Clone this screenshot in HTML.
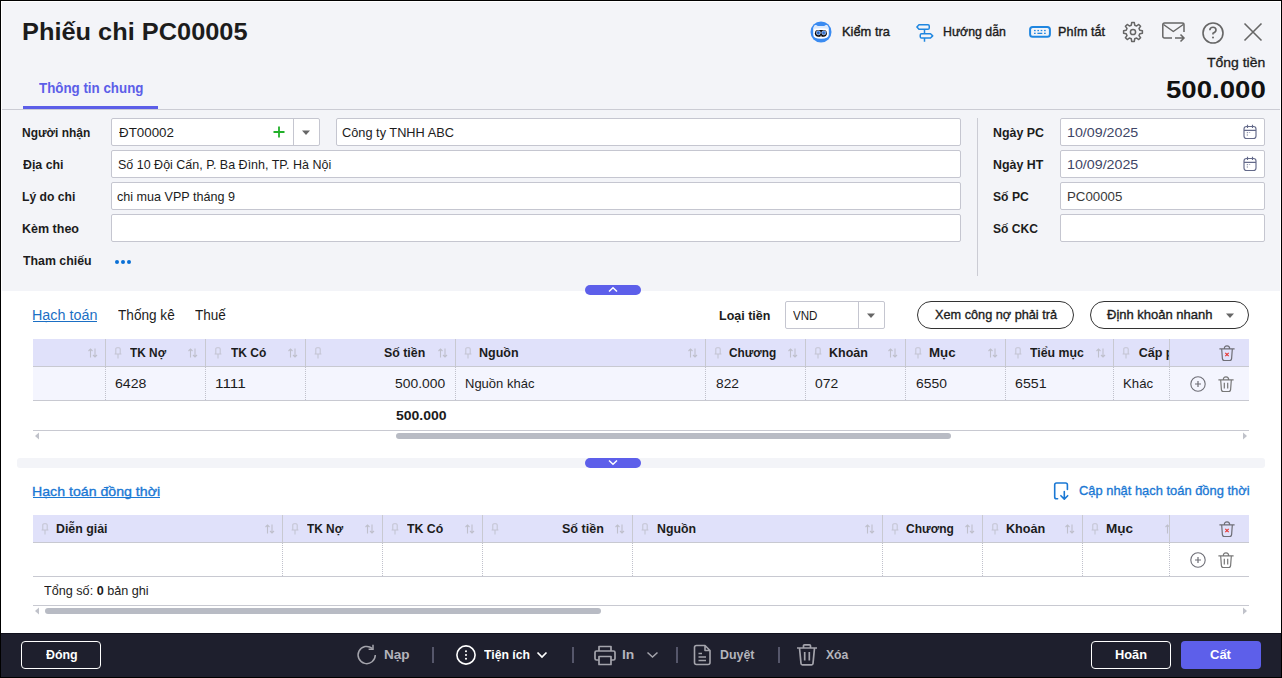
<!DOCTYPE html><html><head><meta charset="utf-8"><style>html,body{margin:0;padding:0;}body{width:1282px;height:678px;position:relative;overflow:hidden;background:#000;font-family:"Liberation Sans", sans-serif;}.t{position:absolute;white-space:nowrap;transform-origin:0 0;}</style></head><body>
<div style="position:absolute;left:1px;top:1px;width:1280px;height:676px;background:#fff;"></div>
<div style="position:absolute;left:2px;top:2px;width:1278px;height:289px;background:#f3f4f8;"></div>
<div style="position:absolute;left:1px;top:633px;width:1280px;height:44px;background:#1e1f2d;"></div>
<div style="position:absolute;left:1px;top:633px;width:1280px;height:1px;background:#10111d;"></div>
<svg style="position:absolute;left:810px;top:21px" width="22" height="22" viewBox="0 0 22 22"><circle cx="11" cy="11" r="10.5" fill="#3a8bf1"/><path d="M3.2 10 Q3.1 5 5.3 3.9 Q8 5.3 11 5.1 Q14 5.3 16.7 3.9 Q18.9 5 18.8 10 V13.5 Q18.7 17.8 11 17.8 Q3.3 17.8 3.2 13.5 Z" fill="#fff"/><path d="M3.4 8 Q3.6 4.8 5.3 3.9 Q8 5.3 11 5.1 Q14 5.3 16.7 3.9 Q18.4 4.8 18.6 8 Q11 6.5 3.4 8Z" fill="#dbe9fc"/><rect x="4.9" y="8.9" width="12" height="6.9" rx="3.45" fill="#050608"/><circle cx="8.4" cy="11.8" r="2.1" fill="#2f7ef0" stroke="#e8f0ff" stroke-width="0.6"/><circle cx="13.8" cy="11.8" r="2.1" fill="#2f7ef0" stroke="#e8f0ff" stroke-width="0.6"/><circle cx="8.2" cy="11.9" r="0.7" fill="#333"/><circle cx="13.6" cy="11.9" r="0.7" fill="#666"/><path d="M10 15 Q11 15.9 12 15" fill="none" stroke="#fff" stroke-width="0.7"/></svg>
<svg style="position:absolute;left:916px;top:23px" width="21" height="20" viewBox="0 0 21 20"><path d="M3 1.75 H12 Q13.25 1.75 13.25 3 V5 Q13.25 6.25 12 6.25 H3 L0.9 4 Z" fill="none" stroke="#1f86e0" stroke-width="1.5" stroke-linejoin="round"/><path d="M5.5 10.75 H14.5 L16.7 12.9 L14.5 15.05 H5.5 Q4.25 15.05 4.25 13.8 V12 Q4.25 10.75 5.5 10.75 Z" fill="none" stroke="#1f86e0" stroke-width="1.5" stroke-linejoin="round"/><path d="M8.5 6.25 V10.75 M8.5 15.05 V18.7" stroke="#1f86e0" stroke-width="1.5"/></svg>
<svg style="position:absolute;left:1028px;top:25px" width="24" height="14" viewBox="0 0 24 14"><rect x="2.1" y="2" width="19.8" height="9.8" rx="2.6" fill="none" stroke="#1f86e0" stroke-width="2"/><rect x="6.05" y="4.9" width="1.6" height="1.3" fill="#1f86e0"/><rect x="9.40" y="4.9" width="1.6" height="1.3" fill="#1f86e0"/><rect x="12.70" y="4.9" width="1.6" height="1.3" fill="#1f86e0"/><rect x="16.10" y="4.9" width="1.6" height="1.3" fill="#1f86e0"/><rect x="6.05" y="7.7" width="1.6" height="1.3" fill="#1f86e0"/><rect x="9.4" y="7.7" width="4.9" height="1.3" fill="#1f86e0"/><rect x="16.1" y="7.7" width="1.6" height="1.3" fill="#1f86e0"/></svg>
<svg style="position:absolute;left:1122px;top:21px" width="22" height="22" viewBox="0 0 22 22"><path d="M9.31 4.21 L9.68 1.59 L12.32 1.59 L12.69 4.21 L14.61 5.00 L16.72 3.41 L18.59 5.28 L17.00 7.39 L17.79 9.31 L20.41 9.68 L20.41 12.32 L17.79 12.69 L17.00 14.61 L18.59 16.72 L16.72 18.59 L14.61 17.00 L12.69 17.79 L12.32 20.41 L9.68 20.41 L9.31 17.79 L7.39 17.00 L5.28 18.59 L3.41 16.72 L5.00 14.61 L4.21 12.69 L1.59 12.32 L1.59 9.68 L4.21 9.31 L5.00 7.39 L3.41 5.28 L5.28 3.41 L7.39 5.00Z" fill="none" stroke="#666" stroke-width="1.5" stroke-linejoin="round"/><circle cx="11" cy="11" r="2.6" fill="none" stroke="#666" stroke-width="1.5"/></svg>
<svg style="position:absolute;left:1161px;top:21px" width="26" height="24" viewBox="0 0 26 24"><path d="M11 17 H3.5 Q1.8 17 1.8 15.3 V3.7 Q1.8 2 3.5 2 H21.2 Q23 2 23 3.7 V11" fill="none" stroke="#666" stroke-width="1.5"/><path d="M2.5 3.5 L12.3 10.5 L22.3 3.5" fill="none" stroke="#666" stroke-width="1.5" stroke-linejoin="round"/><path d="M14 17 H23 M19.5 13.5 L23 17 L19.5 20.5" fill="none" stroke="#666" stroke-width="1.5"/></svg>
<svg style="position:absolute;left:1202px;top:22px" width="22" height="22" viewBox="0 0 22 22"><circle cx="11" cy="11" r="10" fill="none" stroke="#666" stroke-width="1.6"/><path d="M7.8 8.3 Q8 5.3 11 5.3 Q14 5.3 14 8 Q14 10 11 11.2 V12.5" fill="none" stroke="#666" stroke-width="1.6"/><circle cx="11" cy="15.6" r="1" fill="#666"/></svg>
<svg style="position:absolute;left:1243px;top:22px" width="20" height="20" viewBox="0 0 20 20"><path d="M1.5 1.5 L18.5 18.5 M18.5 1.5 L1.5 18.5" stroke="#666" stroke-width="1.6"/></svg>
<div style="position:absolute;left:23px;top:106px;width:135px;height:3px;background:#5c5ee8;"></div>
<div style="position:absolute;left:2px;top:109px;width:1278px;height:1px;background:#cbccd4;"></div>
<div style="position:absolute;left:111px;top:118px;width:209px;height:28px;box-sizing:border-box;background:#fff;border:1px solid #c5c6d0;border-radius:2px;"></div>
<div style="position:absolute;left:293px;top:119px;width:1px;height:26px;background:#c5c6d0;"></div>
<svg style="position:absolute;left:273px;top:126px" width="12" height="12" viewBox="0 0 12 12"><path d="M6 0.5 V11.5 M0.5 6 H11.5" stroke="#22b02a" stroke-width="1.8"/></svg>
<svg style="position:absolute;left:301px;top:130px" width="10" height="6" viewBox="0 0 10 6"><path d="M1 0.5 H9 L5 5Z" fill="#666"/></svg>
<div style="position:absolute;left:336px;top:118px;width:625px;height:28px;box-sizing:border-box;background:#fff;border:1px solid #c5c6d0;border-radius:2px;"></div>
<div style="position:absolute;left:111px;top:150px;width:850px;height:28px;box-sizing:border-box;background:#fff;border:1px solid #c5c6d0;border-radius:2px;"></div>
<div style="position:absolute;left:111px;top:182px;width:850px;height:28px;box-sizing:border-box;background:#fff;border:1px solid #c5c6d0;border-radius:2px;"></div>
<div style="position:absolute;left:111px;top:214px;width:850px;height:28px;box-sizing:border-box;background:#fff;border:1px solid #c5c6d0;border-radius:2px;"></div>
<div style="position:absolute;left:115px;top:260px;width:4px;height:4px;border-radius:50%;background:#0a6fd6"></div>
<div style="position:absolute;left:121px;top:260px;width:4px;height:4px;border-radius:50%;background:#0a6fd6"></div>
<div style="position:absolute;left:127px;top:260px;width:4px;height:4px;border-radius:50%;background:#0a6fd6"></div>
<div style="position:absolute;left:977px;top:118px;width:1px;height:158px;background:#cbccd4;"></div>
<div style="position:absolute;left:1060px;top:118px;width:205px;height:28px;box-sizing:border-box;background:#fff;border:1px solid #c5c6d0;border-radius:2px;"></div>
<div style="position:absolute;left:1060px;top:150px;width:205px;height:28px;box-sizing:border-box;background:#fff;border:1px solid #c5c6d0;border-radius:2px;"></div>
<div style="position:absolute;left:1060px;top:182px;width:205px;height:28px;box-sizing:border-box;background:#fff;border:1px solid #c5c6d0;border-radius:2px;"></div>
<div style="position:absolute;left:1060px;top:214px;width:205px;height:28px;box-sizing:border-box;background:#fff;border:1px solid #c5c6d0;border-radius:2px;"></div>
<svg style="position:absolute;left:1243px;top:124px" width="14" height="16" viewBox="0 0 14 16"><rect x="1" y="2.5" width="12" height="12" rx="2.5" fill="none" stroke="#646a8a" stroke-width="1.15"/><path d="M1 6.3 H13 M4.5 0.8 V4 M9.5 0.8 V4" stroke="#646a8a" stroke-width="1.15"/><rect x="3.8" y="8.2" width="1" height="1" fill="#5a6080"/><rect x="3.8" y="10.5" width="1" height="1" fill="#5a6080"/><rect x="5.8" y="8.2" width="1.4" height="0.7" fill="#8a90b0"/></svg>
<svg style="position:absolute;left:1243px;top:156px" width="14" height="16" viewBox="0 0 14 16"><rect x="1" y="2.5" width="12" height="12" rx="2.5" fill="none" stroke="#646a8a" stroke-width="1.15"/><path d="M1 6.3 H13 M4.5 0.8 V4 M9.5 0.8 V4" stroke="#646a8a" stroke-width="1.15"/><rect x="3.8" y="8.2" width="1" height="1" fill="#5a6080"/><rect x="3.8" y="10.5" width="1" height="1" fill="#5a6080"/><rect x="5.8" y="8.2" width="1.4" height="0.7" fill="#8a90b0"/></svg>
<div style="position:absolute;left:585px;top:285px;width:56px;height:10px;background:#5d5fea;border-radius:5px;"></div>
<svg style="position:absolute;left:608px;top:286px" width="10" height="7" viewBox="0 0 10 7"><path d="M1 5.5 L5 1.8 L9 5.5" fill="none" stroke="#fff" stroke-width="1.5"/></svg>
<div style="position:absolute;left:17px;top:458px;width:1248px;height:10px;background:#f3f4f8;border-radius:3px;"></div>
<div style="position:absolute;left:585px;top:458px;width:56px;height:10px;background:#5d5fea;border-radius:5px;"></div>
<svg style="position:absolute;left:608px;top:459px" width="10" height="7" viewBox="0 0 10 7"><path d="M1 1.5 L5 5.2 L9 1.5" fill="none" stroke="#fff" stroke-width="1.5"/></svg>
<div style="position:absolute;left:33px;top:321px;width:64px;height:1px;background:#1b6fc4;"></div>
<div style="position:absolute;left:785px;top:301px;width:100px;height:28px;box-sizing:border-box;background:#fff;border:1px solid #c5c6d0;border-radius:2px;"></div>
<div style="position:absolute;left:858px;top:302px;width:1px;height:26px;background:#c5c6d0;"></div>
<svg style="position:absolute;left:866px;top:313px" width="10" height="6" viewBox="0 0 10 6"><path d="M1 0.5 H9 L5 5Z" fill="#666"/></svg>
<div style="position:absolute;left:917px;top:301px;width:157px;height:28px;box-sizing:border-box;border:1px solid #333;border-radius:14px;"></div>
<div style="position:absolute;left:1090px;top:301px;width:159px;height:28px;box-sizing:border-box;border:1px solid #333;border-radius:14px;"></div>
<svg style="position:absolute;left:1225px;top:313px" width="10" height="6" viewBox="0 0 10 6"><path d="M1 0.5 H9 L5 5Z" fill="#666"/></svg>
<div style="position:absolute;left:33px;top:339px;width:1216px;height:27px;background:#e0e1fa;"></div>
<div style="position:absolute;left:33px;top:366px;width:1216px;height:1px;background:#c8c9d1;"></div>
<div style="position:absolute;left:105px;top:339px;width:1px;height:27px;background:#c8c9d1;"></div>
<div style="position:absolute;left:205px;top:339px;width:1px;height:27px;background:#c8c9d1;"></div>
<div style="position:absolute;left:305px;top:339px;width:1px;height:27px;background:#c8c9d1;"></div>
<div style="position:absolute;left:455px;top:339px;width:1px;height:27px;background:#c8c9d1;"></div>
<div style="position:absolute;left:705px;top:339px;width:1px;height:27px;background:#c8c9d1;"></div>
<div style="position:absolute;left:805px;top:339px;width:1px;height:27px;background:#c8c9d1;"></div>
<div style="position:absolute;left:905px;top:339px;width:1px;height:27px;background:#c8c9d1;"></div>
<div style="position:absolute;left:1005px;top:339px;width:1px;height:27px;background:#c8c9d1;"></div>
<div style="position:absolute;left:1113px;top:339px;width:1px;height:27px;background:#c8c9d1;"></div>
<div style="position:absolute;left:1169px;top:339px;width:1px;height:27px;background:#c8c9d1;"></div>
<div style="position:absolute;left:33px;top:367px;width:1216px;height:33px;background:#f4f5fe;"></div>
<div style="position:absolute;left:33px;top:400px;width:1216px;height:1px;background:#c8c9d1;"></div>
<div style="position:absolute;left:105px;top:367px;width:0;height:33px;border-left:1px dotted #c0c1cc"></div>
<div style="position:absolute;left:205px;top:367px;width:0;height:33px;border-left:1px dotted #c0c1cc"></div>
<div style="position:absolute;left:305px;top:367px;width:0;height:33px;border-left:1px dotted #c0c1cc"></div>
<div style="position:absolute;left:455px;top:367px;width:0;height:33px;border-left:1px dotted #c0c1cc"></div>
<div style="position:absolute;left:705px;top:367px;width:0;height:33px;border-left:1px dotted #c0c1cc"></div>
<div style="position:absolute;left:805px;top:367px;width:0;height:33px;border-left:1px dotted #c0c1cc"></div>
<div style="position:absolute;left:905px;top:367px;width:0;height:33px;border-left:1px dotted #c0c1cc"></div>
<div style="position:absolute;left:1005px;top:367px;width:0;height:33px;border-left:1px dotted #c0c1cc"></div>
<div style="position:absolute;left:1113px;top:367px;width:0;height:33px;border-left:1px dotted #c0c1cc"></div>
<div style="position:absolute;left:1169px;top:367px;width:0;height:33px;border-left:1px dotted #c0c1cc"></div>
<div style="position:absolute;left:33px;top:430px;width:1216px;height:1px;background:#c8c9d1;"></div>
<svg style="position:absolute;left:114px;top:347px" width="9" height="12" viewBox="0 0 9 12"><path d="M1.8 6.6 V2 Q1.8 0.8 3 0.8 H5 Q6.2 0.8 6.2 2 V6.6 M0.6 6.9 H7.4 M4 6.9 V11.4" fill="none" stroke="#c3c4d2" stroke-width="1.05"/></svg>
<svg style="position:absolute;left:214px;top:347px" width="9" height="12" viewBox="0 0 9 12"><path d="M1.8 6.6 V2 Q1.8 0.8 3 0.8 H5 Q6.2 0.8 6.2 2 V6.6 M0.6 6.9 H7.4 M4 6.9 V11.4" fill="none" stroke="#c3c4d2" stroke-width="1.05"/></svg>
<svg style="position:absolute;left:314px;top:347px" width="9" height="12" viewBox="0 0 9 12"><path d="M1.8 6.6 V2 Q1.8 0.8 3 0.8 H5 Q6.2 0.8 6.2 2 V6.6 M0.6 6.9 H7.4 M4 6.9 V11.4" fill="none" stroke="#c3c4d2" stroke-width="1.05"/></svg>
<svg style="position:absolute;left:464px;top:347px" width="9" height="12" viewBox="0 0 9 12"><path d="M1.8 6.6 V2 Q1.8 0.8 3 0.8 H5 Q6.2 0.8 6.2 2 V6.6 M0.6 6.9 H7.4 M4 6.9 V11.4" fill="none" stroke="#c3c4d2" stroke-width="1.05"/></svg>
<svg style="position:absolute;left:714px;top:347px" width="9" height="12" viewBox="0 0 9 12"><path d="M1.8 6.6 V2 Q1.8 0.8 3 0.8 H5 Q6.2 0.8 6.2 2 V6.6 M0.6 6.9 H7.4 M4 6.9 V11.4" fill="none" stroke="#c3c4d2" stroke-width="1.05"/></svg>
<svg style="position:absolute;left:814px;top:347px" width="9" height="12" viewBox="0 0 9 12"><path d="M1.8 6.6 V2 Q1.8 0.8 3 0.8 H5 Q6.2 0.8 6.2 2 V6.6 M0.6 6.9 H7.4 M4 6.9 V11.4" fill="none" stroke="#c3c4d2" stroke-width="1.05"/></svg>
<svg style="position:absolute;left:914px;top:347px" width="9" height="12" viewBox="0 0 9 12"><path d="M1.8 6.6 V2 Q1.8 0.8 3 0.8 H5 Q6.2 0.8 6.2 2 V6.6 M0.6 6.9 H7.4 M4 6.9 V11.4" fill="none" stroke="#c3c4d2" stroke-width="1.05"/></svg>
<svg style="position:absolute;left:1014px;top:347px" width="9" height="12" viewBox="0 0 9 12"><path d="M1.8 6.6 V2 Q1.8 0.8 3 0.8 H5 Q6.2 0.8 6.2 2 V6.6 M0.6 6.9 H7.4 M4 6.9 V11.4" fill="none" stroke="#c3c4d2" stroke-width="1.05"/></svg>
<svg style="position:absolute;left:1122px;top:347px" width="9" height="12" viewBox="0 0 9 12"><path d="M1.8 6.6 V2 Q1.8 0.8 3 0.8 H5 Q6.2 0.8 6.2 2 V6.6 M0.6 6.9 H7.4 M4 6.9 V11.4" fill="none" stroke="#c3c4d2" stroke-width="1.05"/></svg>
<svg style="position:absolute;left:88px;top:348px" width="10" height="10" viewBox="0 0 10 10"><path d="M2.5 9.5 V1 M0.5 3 L2.5 1 L4.5 3 M7 0.5 V9 M5 7 L7 9 L9 7" fill="none" stroke="#bfc0cc" stroke-width="1.1"/></svg>
<svg style="position:absolute;left:188px;top:348px" width="10" height="10" viewBox="0 0 10 10"><path d="M2.5 9.5 V1 M0.5 3 L2.5 1 L4.5 3 M7 0.5 V9 M5 7 L7 9 L9 7" fill="none" stroke="#bfc0cc" stroke-width="1.1"/></svg>
<svg style="position:absolute;left:288px;top:348px" width="10" height="10" viewBox="0 0 10 10"><path d="M2.5 9.5 V1 M0.5 3 L2.5 1 L4.5 3 M7 0.5 V9 M5 7 L7 9 L9 7" fill="none" stroke="#bfc0cc" stroke-width="1.1"/></svg>
<svg style="position:absolute;left:438px;top:348px" width="10" height="10" viewBox="0 0 10 10"><path d="M2.5 9.5 V1 M0.5 3 L2.5 1 L4.5 3 M7 0.5 V9 M5 7 L7 9 L9 7" fill="none" stroke="#bfc0cc" stroke-width="1.1"/></svg>
<svg style="position:absolute;left:688px;top:348px" width="10" height="10" viewBox="0 0 10 10"><path d="M2.5 9.5 V1 M0.5 3 L2.5 1 L4.5 3 M7 0.5 V9 M5 7 L7 9 L9 7" fill="none" stroke="#bfc0cc" stroke-width="1.1"/></svg>
<svg style="position:absolute;left:788px;top:348px" width="10" height="10" viewBox="0 0 10 10"><path d="M2.5 9.5 V1 M0.5 3 L2.5 1 L4.5 3 M7 0.5 V9 M5 7 L7 9 L9 7" fill="none" stroke="#bfc0cc" stroke-width="1.1"/></svg>
<svg style="position:absolute;left:888px;top:348px" width="10" height="10" viewBox="0 0 10 10"><path d="M2.5 9.5 V1 M0.5 3 L2.5 1 L4.5 3 M7 0.5 V9 M5 7 L7 9 L9 7" fill="none" stroke="#bfc0cc" stroke-width="1.1"/></svg>
<svg style="position:absolute;left:988px;top:348px" width="10" height="10" viewBox="0 0 10 10"><path d="M2.5 9.5 V1 M0.5 3 L2.5 1 L4.5 3 M7 0.5 V9 M5 7 L7 9 L9 7" fill="none" stroke="#bfc0cc" stroke-width="1.1"/></svg>
<svg style="position:absolute;left:1096px;top:348px" width="10" height="10" viewBox="0 0 10 10"><path d="M2.5 9.5 V1 M0.5 3 L2.5 1 L4.5 3 M7 0.5 V9 M5 7 L7 9 L9 7" fill="none" stroke="#bfc0cc" stroke-width="1.1"/></svg>
<div style="position:absolute;left:1138px;top:340px;width:31px;height:26px;overflow:hidden"><div class="t" style="left:0.75px;top:7.22px;font-size:12.5px;line-height:12.5px;font-weight:700;color:#1c1c1c">Cấp phát</div></div>
<svg style="position:absolute;left:1219px;top:345px" width="16" height="16" viewBox="0 0 16 16"><path d="M0.4 3.9 H15.6 M5.3 3.9 Q5.3 0.9 8 0.9 Q10.7 0.9 10.7 3.9 M2.7 4.2 L3.4 13.6 Q3.6 15.6 5.4 15.6 H10.6 Q12.4 15.6 12.6 13.6 L13.3 4.2" fill="none" stroke="#6e6e76" stroke-width="1.2"/><path d="M6.3 7.8 L9.7 11.2 M9.7 7.8 L6.3 11.2" stroke="#e53935" stroke-width="1.2"/></svg>
<svg style="position:absolute;left:1190px;top:376px" width="16" height="16" viewBox="0 0 16 16"><circle cx="8" cy="8" r="7.2" fill="none" stroke="#6e6e76" stroke-width="1.1"/><path d="M8 5 V11 M5 8 H11" stroke="#6e6e76" stroke-width="1.2"/></svg>
<svg style="position:absolute;left:1218px;top:376px" width="16" height="16" viewBox="0 0 16 16"><path d="M0.4 3.9 H15.6 M5.3 3.9 Q5.3 0.9 8 0.9 Q10.7 0.9 10.7 3.9 M2.7 4.2 L3.4 13.6 Q3.6 15.6 5.4 15.6 H10.6 Q12.4 15.6 12.6 13.6 L13.3 4.2 M6.3 6.8 V12.5 M9.7 6.8 V12.5" fill="none" stroke="#777" stroke-width="1.2"/></svg>
<svg style="position:absolute;left:34px;top:432px" width="6" height="8" viewBox="0 0 6 8"><path d="M5 0.5 V7.5 L1 4Z" fill="#c0c2ca"/></svg>
<svg style="position:absolute;left:1242px;top:432px" width="6" height="8" viewBox="0 0 6 8"><path d="M1 0.5 V7.5 L5 4Z" fill="#c0c2ca"/></svg>
<div style="position:absolute;left:396px;top:433px;width:555px;height:6px;background:#b8bbc4;border-radius:3px;"></div>
<div style="position:absolute;left:33px;top:497px;width:127px;height:1px;background:#1a78d4;"></div>
<svg style="position:absolute;left:1052px;top:481px" width="18" height="20" viewBox="0 0 18 20"><path d="M5.6 17.7 H4.5 Q2.7 17.7 2.7 15.9 V3.8 Q2.7 2 4.5 2 H13.6 Q15.4 2 15.4 3.8 V8.5" fill="none" stroke="#1a78d4" stroke-width="1.6" stroke-linecap="round"/><path d="M12.3 10.6 V18 M8.9 14.7 L12.3 18.1 L15.7 14.7" fill="none" stroke="#1a78d4" stroke-width="1.6" stroke-linecap="round" stroke-linejoin="round"/></svg>
<div style="position:absolute;left:33px;top:515px;width:1216px;height:27px;background:#e0e1fa;"></div>
<div style="position:absolute;left:33px;top:542px;width:1216px;height:1px;background:#c8c9d1;"></div>
<div style="position:absolute;left:282px;top:515px;width:1px;height:27px;background:#c8c9d1;"></div>
<div style="position:absolute;left:382px;top:515px;width:1px;height:27px;background:#c8c9d1;"></div>
<div style="position:absolute;left:482px;top:515px;width:1px;height:27px;background:#c8c9d1;"></div>
<div style="position:absolute;left:632px;top:515px;width:1px;height:27px;background:#c8c9d1;"></div>
<div style="position:absolute;left:882px;top:515px;width:1px;height:27px;background:#c8c9d1;"></div>
<div style="position:absolute;left:982px;top:515px;width:1px;height:27px;background:#c8c9d1;"></div>
<div style="position:absolute;left:1082px;top:515px;width:1px;height:27px;background:#c8c9d1;"></div>
<div style="position:absolute;left:1169px;top:515px;width:1px;height:27px;background:#c8c9d1;"></div>
<div style="position:absolute;left:282px;top:543px;width:0;height:33px;border-left:1px dotted #c0c1cc"></div>
<div style="position:absolute;left:382px;top:543px;width:0;height:33px;border-left:1px dotted #c0c1cc"></div>
<div style="position:absolute;left:482px;top:543px;width:0;height:33px;border-left:1px dotted #c0c1cc"></div>
<div style="position:absolute;left:632px;top:543px;width:0;height:33px;border-left:1px dotted #c0c1cc"></div>
<div style="position:absolute;left:882px;top:543px;width:0;height:33px;border-left:1px dotted #c0c1cc"></div>
<div style="position:absolute;left:982px;top:543px;width:0;height:33px;border-left:1px dotted #c0c1cc"></div>
<div style="position:absolute;left:1082px;top:543px;width:0;height:33px;border-left:1px dotted #c0c1cc"></div>
<div style="position:absolute;left:1169px;top:543px;width:0;height:33px;border-left:1px dotted #c0c1cc"></div>
<div style="position:absolute;left:33px;top:576px;width:1216px;height:1px;background:#c8c9d1;"></div>
<div style="position:absolute;left:33px;top:605px;width:1216px;height:1px;background:#c8c9d1;"></div>
<svg style="position:absolute;left:41px;top:523px" width="9" height="12" viewBox="0 0 9 12"><path d="M1.8 6.6 V2 Q1.8 0.8 3 0.8 H5 Q6.2 0.8 6.2 2 V6.6 M0.6 6.9 H7.4 M4 6.9 V11.4" fill="none" stroke="#c3c4d2" stroke-width="1.05"/></svg>
<svg style="position:absolute;left:291px;top:523px" width="9" height="12" viewBox="0 0 9 12"><path d="M1.8 6.6 V2 Q1.8 0.8 3 0.8 H5 Q6.2 0.8 6.2 2 V6.6 M0.6 6.9 H7.4 M4 6.9 V11.4" fill="none" stroke="#c3c4d2" stroke-width="1.05"/></svg>
<svg style="position:absolute;left:391px;top:523px" width="9" height="12" viewBox="0 0 9 12"><path d="M1.8 6.6 V2 Q1.8 0.8 3 0.8 H5 Q6.2 0.8 6.2 2 V6.6 M0.6 6.9 H7.4 M4 6.9 V11.4" fill="none" stroke="#c3c4d2" stroke-width="1.05"/></svg>
<svg style="position:absolute;left:491px;top:523px" width="9" height="12" viewBox="0 0 9 12"><path d="M1.8 6.6 V2 Q1.8 0.8 3 0.8 H5 Q6.2 0.8 6.2 2 V6.6 M0.6 6.9 H7.4 M4 6.9 V11.4" fill="none" stroke="#c3c4d2" stroke-width="1.05"/></svg>
<svg style="position:absolute;left:641px;top:523px" width="9" height="12" viewBox="0 0 9 12"><path d="M1.8 6.6 V2 Q1.8 0.8 3 0.8 H5 Q6.2 0.8 6.2 2 V6.6 M0.6 6.9 H7.4 M4 6.9 V11.4" fill="none" stroke="#c3c4d2" stroke-width="1.05"/></svg>
<svg style="position:absolute;left:891px;top:523px" width="9" height="12" viewBox="0 0 9 12"><path d="M1.8 6.6 V2 Q1.8 0.8 3 0.8 H5 Q6.2 0.8 6.2 2 V6.6 M0.6 6.9 H7.4 M4 6.9 V11.4" fill="none" stroke="#c3c4d2" stroke-width="1.05"/></svg>
<svg style="position:absolute;left:991px;top:523px" width="9" height="12" viewBox="0 0 9 12"><path d="M1.8 6.6 V2 Q1.8 0.8 3 0.8 H5 Q6.2 0.8 6.2 2 V6.6 M0.6 6.9 H7.4 M4 6.9 V11.4" fill="none" stroke="#c3c4d2" stroke-width="1.05"/></svg>
<svg style="position:absolute;left:1091px;top:523px" width="9" height="12" viewBox="0 0 9 12"><path d="M1.8 6.6 V2 Q1.8 0.8 3 0.8 H5 Q6.2 0.8 6.2 2 V6.6 M0.6 6.9 H7.4 M4 6.9 V11.4" fill="none" stroke="#c3c4d2" stroke-width="1.05"/></svg>
<svg style="position:absolute;left:265px;top:524px" width="10" height="10" viewBox="0 0 10 10"><path d="M2.5 9.5 V1 M0.5 3 L2.5 1 L4.5 3 M7 0.5 V9 M5 7 L7 9 L9 7" fill="none" stroke="#bfc0cc" stroke-width="1.1"/></svg>
<svg style="position:absolute;left:365px;top:524px" width="10" height="10" viewBox="0 0 10 10"><path d="M2.5 9.5 V1 M0.5 3 L2.5 1 L4.5 3 M7 0.5 V9 M5 7 L7 9 L9 7" fill="none" stroke="#bfc0cc" stroke-width="1.1"/></svg>
<svg style="position:absolute;left:465px;top:524px" width="10" height="10" viewBox="0 0 10 10"><path d="M2.5 9.5 V1 M0.5 3 L2.5 1 L4.5 3 M7 0.5 V9 M5 7 L7 9 L9 7" fill="none" stroke="#bfc0cc" stroke-width="1.1"/></svg>
<svg style="position:absolute;left:615px;top:524px" width="10" height="10" viewBox="0 0 10 10"><path d="M2.5 9.5 V1 M0.5 3 L2.5 1 L4.5 3 M7 0.5 V9 M5 7 L7 9 L9 7" fill="none" stroke="#bfc0cc" stroke-width="1.1"/></svg>
<svg style="position:absolute;left:865px;top:524px" width="10" height="10" viewBox="0 0 10 10"><path d="M2.5 9.5 V1 M0.5 3 L2.5 1 L4.5 3 M7 0.5 V9 M5 7 L7 9 L9 7" fill="none" stroke="#bfc0cc" stroke-width="1.1"/></svg>
<svg style="position:absolute;left:965px;top:524px" width="10" height="10" viewBox="0 0 10 10"><path d="M2.5 9.5 V1 M0.5 3 L2.5 1 L4.5 3 M7 0.5 V9 M5 7 L7 9 L9 7" fill="none" stroke="#bfc0cc" stroke-width="1.1"/></svg>
<svg style="position:absolute;left:1065px;top:524px" width="10" height="10" viewBox="0 0 10 10"><path d="M2.5 9.5 V1 M0.5 3 L2.5 1 L4.5 3 M7 0.5 V9 M5 7 L7 9 L9 7" fill="none" stroke="#bfc0cc" stroke-width="1.1"/></svg>
<div style="position:absolute;left:1165px;top:524px;width:4px;height:10px;overflow:hidden"><svg style="position:absolute;left:0;top:0" width="10" height="10"><path d="M2.5 9.5 V1 M0.5 3 L2.5 1 L4.5 3 M7 0.5 V9 M5 7 L7 9 L9 7" fill="none" stroke="#bfc0cc" stroke-width="1.1"/></svg></div>
<svg style="position:absolute;left:1219px;top:521px" width="16" height="16" viewBox="0 0 16 16"><path d="M0.4 3.9 H15.6 M5.3 3.9 Q5.3 0.9 8 0.9 Q10.7 0.9 10.7 3.9 M2.7 4.2 L3.4 13.6 Q3.6 15.6 5.4 15.6 H10.6 Q12.4 15.6 12.6 13.6 L13.3 4.2" fill="none" stroke="#6e6e76" stroke-width="1.2"/><path d="M6.3 7.8 L9.7 11.2 M9.7 7.8 L6.3 11.2" stroke="#e53935" stroke-width="1.2"/></svg>
<svg style="position:absolute;left:1190px;top:552px" width="16" height="16" viewBox="0 0 16 16"><circle cx="8" cy="8" r="7.2" fill="none" stroke="#6e6e76" stroke-width="1.1"/><path d="M8 5 V11 M5 8 H11" stroke="#6e6e76" stroke-width="1.2"/></svg>
<svg style="position:absolute;left:1218px;top:552px" width="16" height="16" viewBox="0 0 16 16"><path d="M0.4 3.9 H15.6 M5.3 3.9 Q5.3 0.9 8 0.9 Q10.7 0.9 10.7 3.9 M2.7 4.2 L3.4 13.6 Q3.6 15.6 5.4 15.6 H10.6 Q12.4 15.6 12.6 13.6 L13.3 4.2 M6.3 6.8 V12.5 M9.7 6.8 V12.5" fill="none" stroke="#777" stroke-width="1.2"/></svg>
<svg style="position:absolute;left:34px;top:607px" width="6" height="8" viewBox="0 0 6 8"><path d="M5 0.5 V7.5 L1 4Z" fill="#c0c2ca"/></svg>
<svg style="position:absolute;left:1242px;top:607px" width="6" height="8" viewBox="0 0 6 8"><path d="M1 0.5 V7.5 L5 4Z" fill="#c0c2ca"/></svg>
<div style="position:absolute;left:45px;top:608px;width:556px;height:6px;background:#b8bbc4;border-radius:3px;"></div>
<div style="position:absolute;left:21px;top:641px;width:80px;height:28px;box-sizing:border-box;border:1px solid #fff;border-radius:4px;"></div>
<svg style="position:absolute;left:356px;top:644px" width="22" height="22" viewBox="0 0 22 22"><path d="M19.3 11 A8.6 8.6 0 1 1 16.2 4.4" fill="none" stroke="#a4a4ac" stroke-width="1.5"/><path d="M17 0.8 V5.2 H12.6" fill="none" stroke="#a4a4ac" stroke-width="1.5"/></svg>
<div style="position:absolute;left:432px;top:647px;width:2px;height:16px;background:#55566a;"></div>
<svg style="position:absolute;left:455px;top:644px" width="22" height="22" viewBox="0 0 22 22"><circle cx="11" cy="11" r="9.1" fill="none" stroke="#fff" stroke-width="1.6"/><circle cx="11" cy="7.3" r="1.05" fill="#fff"/><circle cx="11" cy="11" r="1.05" fill="#fff"/><circle cx="11" cy="14.7" r="1.05" fill="#fff"/></svg>
<svg style="position:absolute;left:536px;top:651px" width="12" height="8" viewBox="0 0 12 8"><path d="M1.5 1.5 L6 6 L10.5 1.5" fill="none" stroke="#fff" stroke-width="1.7"/></svg>
<div style="position:absolute;left:572px;top:647px;width:2px;height:16px;background:#55566a;"></div>
<svg style="position:absolute;left:593px;top:644px" width="24" height="22" viewBox="0 0 24 22"><path d="M6 7 V2.5 H18 V7 M6 16 H3.5 Q2 16 2 14.5 V8.5 Q2 7 3.5 7 H20.5 Q22 7 22 8.5 V14.5 Q22 16 20.5 16 H18 M6 12.5 H18 V20.5 H6Z" fill="none" stroke="#a4a4ac" stroke-width="1.7" stroke-linejoin="round"/></svg>
<svg style="position:absolute;left:646px;top:651px" width="13" height="8" viewBox="0 0 13 8"><path d="M1.5 1.5 L6.5 6 L11.5 1.5" fill="none" stroke="#a4a4ac" stroke-width="1.5"/></svg>
<div style="position:absolute;left:676px;top:647px;width:2px;height:16px;background:#55566a;"></div>
<svg style="position:absolute;left:693px;top:644px" width="20" height="22" viewBox="0 0 20 22"><path d="M3.5 1.5 H12 L17 6.5 V18.5 Q17 20.5 15 20.5 H3.5 Q1.5 20.5 1.5 18.5 V3.5 Q1.5 1.5 3.5 1.5Z M12 1.5 V6.5 H17 M5.5 9.5 H9 M5.5 13 H13 M5.5 16.5 H13" fill="none" stroke="#a4a4ac" stroke-width="1.6" stroke-linejoin="round"/></svg>
<div style="position:absolute;left:778px;top:647px;width:2px;height:16px;background:#55566a;"></div>
<svg style="position:absolute;left:795px;top:643px" width="24" height="24" viewBox="0 0 24 24"><path d="M2 5 H22 M8.5 5 V2.8 Q8.5 1.8 9.5 1.8 H14.5 Q15.5 1.8 15.5 2.8 V5 M4.5 5 L6 20.5 Q6.1 21.8 7.4 21.8 H16.6 Q17.9 21.8 18 20.5 L19.5 5 M9.7 9 V17.5 M14.3 9 V17.5" fill="none" stroke="#a4a4ac" stroke-width="1.7"/></svg>
<div style="position:absolute;left:1091px;top:641px;width:80px;height:28px;box-sizing:border-box;border:1px solid #fff;border-radius:4px;"></div>
<div style="position:absolute;left:1181px;top:641px;width:80px;height:28px;background:#5d5fea;border-radius:4px;"></div>
<div class="t" style="left:22.00px;top:20.00px;font-size:24px;line-height:24px;font-weight:700;color:#1c1c1c;transform:scaleX(1.0569);">Phiếu chi PC00005</div>
<div class="t" style="left:841.70px;top:25.00px;font-size:13px;line-height:13px;font-weight:400;color:#1c1c1c;transform:scaleX(0.9898);-webkit-text-stroke:0.4px #1c1c1c;">Kiểm tra</div>
<div class="t" style="left:942.70px;top:25.00px;font-size:13px;line-height:13px;font-weight:400;color:#1c1c1c;transform:scaleX(0.9463);-webkit-text-stroke:0.4px #1c1c1c;">Hướng dẫn</div>
<div class="t" style="left:1057.70px;top:25.00px;font-size:13px;line-height:13px;font-weight:400;color:#1c1c1c;transform:scaleX(0.9690);-webkit-text-stroke:0.4px #1c1c1c;">Phím tắt</div>
<div class="t" style="left:1207.00px;top:56.00px;font-size:13px;line-height:13px;font-weight:400;color:#1c1c1c;transform:scaleX(1.0728);-webkit-text-stroke:0.3px #1c1c1c;">Tổng tiền</div>
<div class="t" style="left:1165.66px;top:78.00px;font-size:24px;line-height:24px;font-weight:700;color:#111;transform:scaleX(1.1509);">500.000</div>
<div class="t" style="left:38.66px;top:81.00px;font-size:14px;line-height:14px;font-weight:700;color:#5c5ee8;transform:scaleX(0.9524);">Thông tin chung</div>
<div class="t" style="left:22.32px;top:127.00px;font-size:12.5px;line-height:12.5px;font-weight:700;color:#1c1c1c;transform:scaleX(0.9561);">Người nhận</div>
<div class="t" style="left:23.32px;top:159.00px;font-size:12.5px;line-height:12.5px;font-weight:700;color:#1c1c1c;transform:scaleX(0.9887);">Địa chi</div>
<div class="t" style="left:22.32px;top:191.00px;font-size:12.5px;line-height:12.5px;font-weight:700;color:#1c1c1c;transform:scaleX(0.9726);">Lý do chi</div>
<div class="t" style="left:22.32px;top:223.00px;font-size:12.5px;line-height:12.5px;font-weight:700;color:#1c1c1c;transform:scaleX(1.0009);">Kèm theo</div>
<div class="t" style="left:23.32px;top:255.00px;font-size:12.5px;line-height:12.5px;font-weight:700;color:#1c1c1c;transform:scaleX(0.9873);">Tham chiếu</div>
<div class="t" style="left:118.70px;top:126.00px;font-size:13px;line-height:13px;font-weight:400;color:#1c1c1c;transform:scaleX(1.0270);">ĐT00002</div>
<div class="t" style="left:341.70px;top:126.00px;font-size:13px;line-height:13px;font-weight:400;color:#1c1c1c;transform:scaleX(0.9825);">Công ty TNHH ABC</div>
<div class="t" style="left:117.70px;top:158.00px;font-size:13px;line-height:13px;font-weight:400;color:#1c1c1c;transform:scaleX(0.9610);">Số 10 Đội Cấn, P. Ba Đình, TP. Hà Nội</div>
<div class="t" style="left:117.34px;top:190.00px;font-size:13px;line-height:13px;font-weight:400;color:#1c1c1c;transform:scaleX(0.9673);">chi mua VPP tháng 9</div>
<div class="t" style="left:992.70px;top:127.00px;font-size:12.5px;line-height:12.5px;font-weight:700;color:#1c1c1c;transform:scaleX(0.9902);">Ngày PC</div>
<div class="t" style="left:992.70px;top:159.00px;font-size:12.5px;line-height:12.5px;font-weight:700;color:#1c1c1c;transform:scaleX(0.9902);">Ngày HT</div>
<div class="t" style="left:992.70px;top:191.00px;font-size:12.5px;line-height:12.5px;font-weight:700;color:#1c1c1c;transform:scaleX(0.9731);">Số PC</div>
<div class="t" style="left:992.70px;top:223.00px;font-size:12.5px;line-height:12.5px;font-weight:700;color:#1c1c1c;transform:scaleX(0.9670);">Số CKC</div>
<div class="t" style="left:1066.70px;top:126.00px;font-size:13px;line-height:13px;font-weight:400;color:#3e4566;transform:scaleX(1.0955);">10/09/2025</div>
<div class="t" style="left:1066.70px;top:158.00px;font-size:13px;line-height:13px;font-weight:400;color:#3e4566;transform:scaleX(1.0955);">10/09/2025</div>
<div class="t" style="left:1066.70px;top:190.00px;font-size:13px;line-height:13px;font-weight:400;color:#3a3a3a;transform:scaleX(1.0220);">PC00005</div>
<div class="t" style="left:32.36px;top:308.00px;font-size:14px;line-height:14px;font-weight:400;color:#1b6fc4;transform:scaleX(1.0243);">Hạch toán</div>
<div class="t" style="left:117.68px;top:308.00px;font-size:14px;line-height:14px;font-weight:400;color:#1c1c1c;transform:scaleX(0.9719);">Thống kê</div>
<div class="t" style="left:194.64px;top:308.00px;font-size:14px;line-height:14px;font-weight:400;color:#1c1c1c;transform:scaleX(0.9677);">Thuế</div>
<div class="t" style="left:718.68px;top:310.00px;font-size:12.5px;line-height:12.5px;font-weight:700;color:#1c1c1c;transform:scaleX(0.9987);">Loại tiền</div>
<div class="t" style="left:792.66px;top:309.00px;font-size:13px;line-height:13px;font-weight:400;color:#1c1c1c;transform:scaleX(0.8913);">VND</div>
<div class="t" style="left:934.70px;top:308.00px;font-size:13px;line-height:13px;font-weight:400;color:#1c1c1c;transform:scaleX(0.9773);-webkit-text-stroke:0.35px #1c1c1c;">Xem công nợ phải trả</div>
<div class="t" style="left:1107.00px;top:308.00px;font-size:13px;line-height:13px;font-weight:400;color:#1c1c1c;transform:scaleX(0.9997);-webkit-text-stroke:0.35px #1c1c1c;">Định khoản nhanh</div>
<div class="t" style="left:130.36px;top:347.00px;font-size:12.5px;line-height:12.5px;font-weight:700;color:#1c1c1c;transform:scaleX(0.9474);">TK Nợ</div>
<div class="t" style="left:230.70px;top:347.00px;font-size:12.5px;line-height:12.5px;font-weight:700;color:#1c1c1c;transform:scaleX(0.9597);">TK Có</div>
<div class="t" style="left:384.36px;top:347.00px;font-size:12.5px;line-height:12.5px;font-weight:700;color:#1c1c1c;transform:scaleX(0.9887);">Số tiền</div>
<div class="t" style="left:479.00px;top:347.00px;font-size:12.5px;line-height:12.5px;font-weight:700;color:#1c1c1c;transform:scaleX(1.0000);">Nguồn</div>
<div class="t" style="left:728.70px;top:347.00px;font-size:12.5px;line-height:12.5px;font-weight:700;color:#1c1c1c;transform:scaleX(0.9470);">Chương</div>
<div class="t" style="left:829.00px;top:347.00px;font-size:12.5px;line-height:12.5px;font-weight:700;color:#1c1c1c;transform:scaleX(0.9984);">Khoản</div>
<div class="t" style="left:929.36px;top:347.00px;font-size:12.5px;line-height:12.5px;font-weight:700;color:#1c1c1c;transform:scaleX(1.0657);">Mục</div>
<div class="t" style="left:1030.32px;top:347.00px;font-size:12.5px;line-height:12.5px;font-weight:700;color:#1c1c1c;transform:scaleX(0.9846);">Tiểu mục</div>
<div class="t" style="left:115.34px;top:377.00px;font-size:13px;line-height:13px;font-weight:400;color:#1c1c1c;transform:scaleX(1.0871);">6428</div>
<div class="t" style="left:215.32px;top:377.00px;font-size:13px;line-height:13px;font-weight:400;color:#1c1c1c;transform:scaleX(1.1824);">1111</div>
<div class="t" style="left:394.70px;top:377.00px;font-size:13px;line-height:13px;font-weight:400;color:#1c1c1c;transform:scaleX(1.0673);">500.000</div>
<div class="t" style="left:465.00px;top:377.00px;font-size:13px;line-height:13px;font-weight:400;color:#1c1c1c;transform:scaleX(1.0000);">Nguồn khác</div>
<div class="t" style="left:715.64px;top:377.00px;font-size:13px;line-height:13px;font-weight:400;color:#1c1c1c;transform:scaleX(1.0589);">822</div>
<div class="t" style="left:815.34px;top:377.00px;font-size:13px;line-height:13px;font-weight:400;color:#1c1c1c;transform:scaleX(1.0713);">072</div>
<div class="t" style="left:915.70px;top:377.00px;font-size:13px;line-height:13px;font-weight:400;color:#1c1c1c;transform:scaleX(1.0662);">6550</div>
<div class="t" style="left:1015.00px;top:377.00px;font-size:13px;line-height:13px;font-weight:400;color:#1c1c1c;transform:scaleX(1.0898);">6551</div>
<div class="t" style="left:1123.32px;top:377.00px;font-size:13px;line-height:13px;font-weight:400;color:#1c1c1c;transform:scaleX(1.0143);">Khác</div>
<div class="t" style="left:395.64px;top:409.00px;font-size:13px;line-height:13px;font-weight:700;color:#1c1c1c;transform:scaleX(1.0774);">500.000</div>
<div class="t" style="left:32.00px;top:485.00px;font-size:13.5px;line-height:13.5px;font-weight:400;color:#1a78d4;transform:scaleX(1.0483);-webkit-text-stroke:0.35px #1a78d4;">Hạch toán đồng thời</div>
<div class="t" style="left:1078.70px;top:484.00px;font-size:13.5px;line-height:13.5px;font-weight:400;color:#1a78d4;transform:scaleX(0.9555);-webkit-text-stroke:0.35px #1a78d4;">Cập nhật hạch toán đồng thời</div>
<div class="t" style="left:56.34px;top:523.00px;font-size:12.5px;line-height:12.5px;font-weight:700;color:#1c1c1c;transform:scaleX(0.9882);">Diễn giải</div>
<div class="t" style="left:307.00px;top:523.00px;font-size:12.5px;line-height:12.5px;font-weight:700;color:#1c1c1c;transform:scaleX(0.9474);">TK Nợ</div>
<div class="t" style="left:407.02px;top:523.00px;font-size:12.5px;line-height:12.5px;font-weight:700;color:#1c1c1c;transform:scaleX(0.9840);">TK Có</div>
<div class="t" style="left:561.66px;top:523.00px;font-size:12.5px;line-height:12.5px;font-weight:700;color:#1c1c1c;transform:scaleX(1.0032);">Số tiền</div>
<div class="t" style="left:656.70px;top:523.00px;font-size:12.5px;line-height:12.5px;font-weight:700;color:#1c1c1c;transform:scaleX(0.9873);">Nguồn</div>
<div class="t" style="left:906.00px;top:523.00px;font-size:12.5px;line-height:12.5px;font-weight:700;color:#1c1c1c;transform:scaleX(0.9583);">Chương</div>
<div class="t" style="left:1006.00px;top:523.00px;font-size:12.5px;line-height:12.5px;font-weight:700;color:#1c1c1c;transform:scaleX(1.0107);">Khoản</div>
<div class="t" style="left:1106.36px;top:523.00px;font-size:12.5px;line-height:12.5px;font-weight:700;color:#1c1c1c;transform:scaleX(1.0851);">Mục</div>
<div class="t" style="left:43.68px;top:584.00px;font-size:13px;line-height:13px;font-weight:400;color:#1c1c1c;transform:scaleX(0.9716);">Tổng số: <b>0</b> bản ghi</div>
<div class="t" style="left:46.02px;top:648.00px;font-size:13px;line-height:13px;font-weight:700;color:#fff;transform:scaleX(0.9537);">Đóng</div>
<div class="t" style="left:384.00px;top:648.00px;font-size:13px;line-height:13px;font-weight:700;color:#b4b4bc;transform:scaleX(1.0435);">Nạp</div>
<div class="t" style="left:484.32px;top:648.00px;font-size:13px;line-height:13px;font-weight:700;color:#fff;transform:scaleX(0.9401);">Tiện ích</div>
<div class="t" style="left:622.32px;top:648.00px;font-size:13px;line-height:13px;font-weight:700;color:#b4b4bc;transform:scaleX(1.0676);">In</div>
<div class="t" style="left:719.66px;top:648.00px;font-size:13px;line-height:13px;font-weight:700;color:#b4b4bc;transform:scaleX(0.9550);">Duyệt</div>
<div class="t" style="left:825.70px;top:648.00px;font-size:13px;line-height:13px;font-weight:700;color:#b4b4bc;transform:scaleX(0.9368);">Xóa</div>
<div class="t" style="left:1115.02px;top:648.00px;font-size:13px;line-height:13px;font-weight:700;color:#fff;transform:scaleX(0.9866);">Hoãn</div>
<div class="t" style="left:1210.00px;top:648.00px;font-size:13px;line-height:13px;font-weight:700;color:#fff;transform:scaleX(1.0000);">Cất</div>
</body></html>
